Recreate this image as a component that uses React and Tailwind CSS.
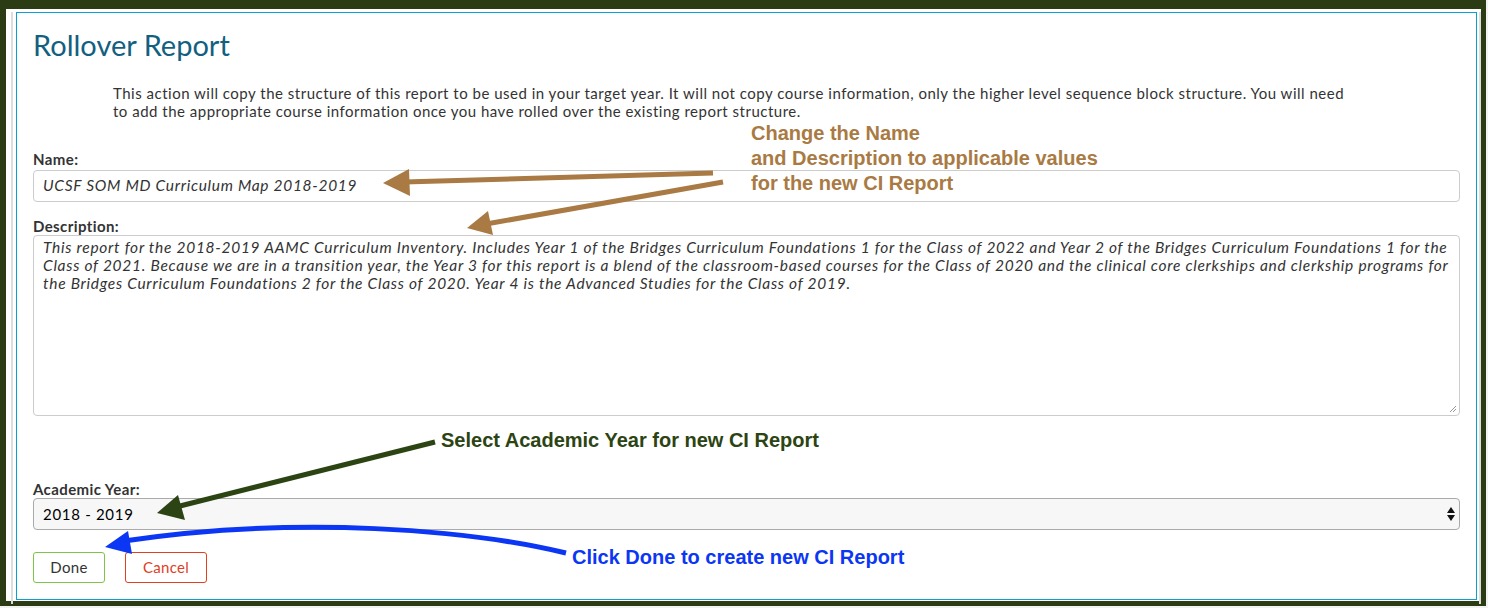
import React from "react";

const ui = { fontFamily: "Lato, 'Open Sans', sans-serif" };
const note = { fontFamily: "'Liberation Sans', Arial, sans-serif" };

function Annotations() {
  return (
    <>
      <svg className="pointer-events-none absolute left-0 top-0" width="1488" height="608">
        <line x1="713" y1="173" x2="404" y2="182" stroke="#a97a43" strokeWidth="5" />
        <polygon points="383,183 409,169 410,196" fill="#a97a43" />
        <line x1="723" y1="182" x2="486" y2="224" stroke="#a97a43" strokeWidth="5" />
        <polygon points="467,228 488,211 493,235" fill="#a97a43" />
        <line x1="435" y1="442" x2="176" y2="507" stroke="#2c4413" strokeWidth="5" />
        <polygon points="157,513 178,495 185,520" fill="#2c4413" />
        <path d="M566 553 C 470 530 300 515 124 541" fill="none" stroke="#0b36f4" strokeWidth="5" />
        <polygon points="105,547 128,531 132,554" fill="#0b36f4" />
      </svg>
      <div
        className="pointer-events-none absolute left-[751px] top-[121px] text-[20px] font-bold leading-[25px] text-[#a97a43]"
        style={note}
      >
        Change the Name
        <br />
        and Description to applicable values
        <br />
        for the new CI Report
      </div>
      <div
        className="pointer-events-none absolute left-[441px] top-[428px] text-[20px] font-bold leading-[25px] text-[#2c4413]"
        style={note}
      >
        Select Academic Year for new CI Report
      </div>
      <div
        className="pointer-events-none absolute left-[572px] top-[545px] text-[20px] font-bold leading-[25px] text-[#0b36f4]"
        style={note}
      >
        Click Done to create new CI Report
      </div>
    </>
  );
}

export default function App() {
  return (
    <div className="relative h-[608px] w-[1488px] overflow-hidden bg-[#f2f2f2]" style={ui}>
      <div className="h-[606px] w-[1486px] border-b-[5px] border-l-[6px] border-r-[5px] border-t-[9px] border-[#2b3c15] bg-white">
        <div className="ml-[5px] h-full border-x-2 border-[#dddddd]">
          <div className="ml-[3px] mr-[2px] mt-[3px] h-[588px] border border-[#0aa0d4] px-4 pt-4 text-[#333]">
            <h1 className="text-[29px] leading-[32px] text-[#135f7f]">Rollover Report</h1>

            <p className="ml-[80px] mt-[23px] whitespace-nowrap text-[15px] leading-[18px] tracking-[0.5px]">
              This action will copy the structure of this report to be used in your target year. It will not copy course information, only the higher level sequence block structure. You will need
              <br />
              to add the appropriate course information once you have rolled over the existing report structure.
            </p>

            <label className="mt-[30px] block text-[15px] font-bold leading-[18px] tracking-[0.4px]">Name:</label>
            <div className="mt-[2px] flex h-[32px] items-center rounded border border-[#cccccc] pl-[9px] text-[15.5px] italic tracking-[0.7px]">
              UCSF SOM MD Curriculum Map 2018-2019
            </div>

            <label className="mt-[15px] block text-[15px] font-bold leading-[18px] tracking-[0.4px]">Description:</label>
            <div className="relative h-[181px] rounded border border-[#cccccc] pl-[9px] pt-[2px] text-[15.5px] italic leading-[18px] tracking-[0.72px] whitespace-nowrap">
              This report for the 2018-2019 AAMC Curriculum Inventory. Includes Year 1 of the Bridges Curriculum Foundations 1 for the Class of 2022 and Year 2 of the Bridges Curriculum Foundations 1 for the
              <br />
              Class of 2021. Because we are in a transition year, the Year 3 for this report is a blend of the classroom-based courses for the Class of 2020 and the clinical core clerkships and clerkship programs for
              <br />
              the Bridges Curriculum Foundations 2 for the Class of 2020. Year 4 is the Advanced Studies for the Class of 2019.
              <svg className="absolute bottom-[2px] right-[2px]" width="8" height="8" viewBox="0 0 8 8">
                <path d="M1 7 L7 1 M4 7 L7 4" stroke="#999" strokeWidth="1" />
              </svg>
            </div>

            <label className="mt-[64px] block text-[15px] font-bold leading-[18px] tracking-[0.4px]">Academic Year:</label>
            <div className="flex h-[32px] items-center justify-between rounded border border-[#aaaaaa] bg-[#f7f7f7] pl-[9px] pr-[3px] text-[15px] tracking-[0.7px] text-black">
              <span>2018 - 2019</span>
              <svg width="10" height="16" viewBox="0 0 10 16">
                <polygon points="5,1 9,7 1,7" fill="#111" />
                <polygon points="1,9 9,9 5,15" fill="#111" />
              </svg>
            </div>

            <div className="mt-[22px] flex gap-5">
              <button className="h-[31px] w-[72px] rounded-[3px] border border-[#80c34a] bg-white text-[15px] tracking-[0.3px] text-[#333]">
                Done
              </button>
              <button className="h-[31px] w-[82px] rounded-[3px] border border-[#e0401e] bg-white text-[15px] tracking-[0.3px] text-[#e0401e]">
                Cancel
              </button>
            </div>
          </div>
        </div>
      </div>
      <Annotations />
    </div>
  );
}
